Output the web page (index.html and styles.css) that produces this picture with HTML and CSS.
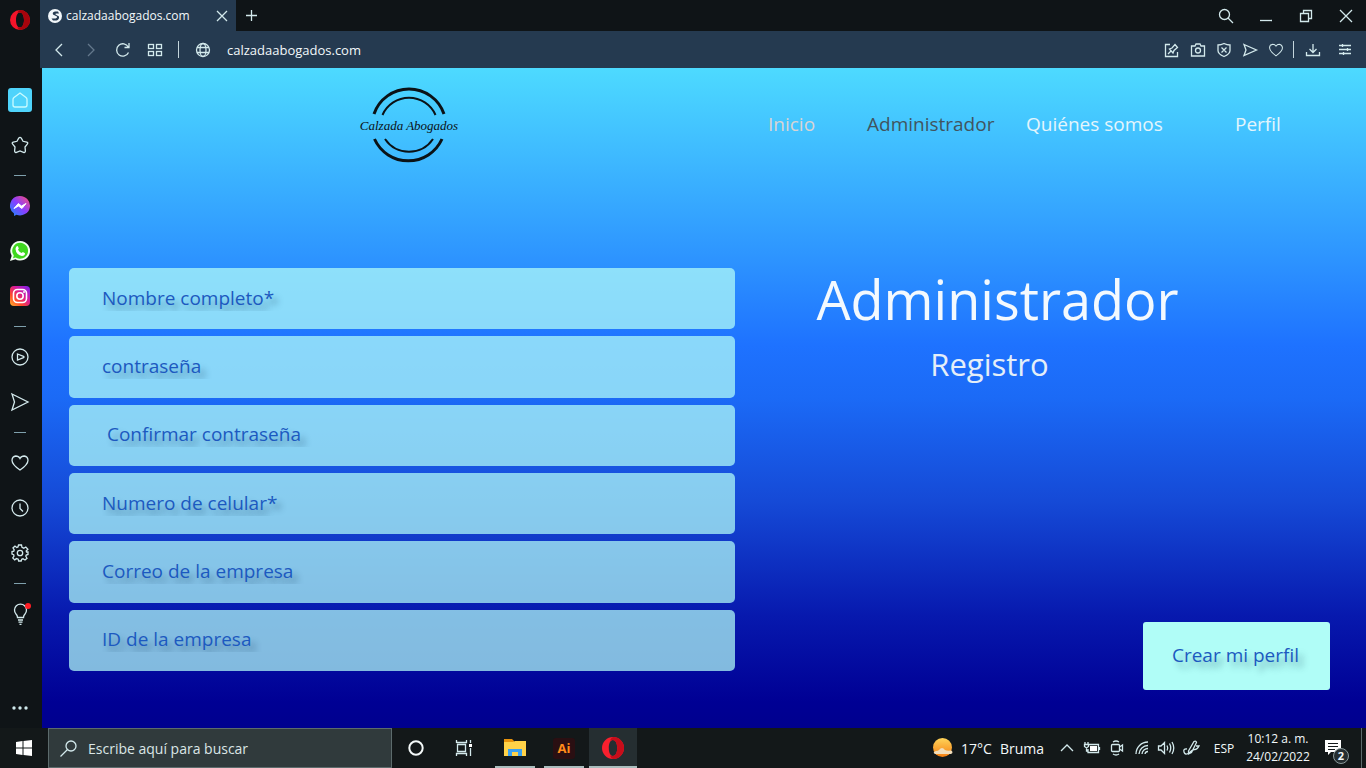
FILE: index.html
```html
<!DOCTYPE html>
<html lang="es">
<head>
<meta charset="utf-8">
<title>calzadaabogados.com</title>
<link rel="stylesheet" href="styles.css">
</head>
<body>
<div class="desktop">
  <aside class="sidebar">
    <button class="side-brand" aria-label="Opera"><svg width="20" height="20" viewBox="0 0 20 20"><path d="M10 0a10 10 0 1 0 0 20a10 10 0 0 0 0-20zM10 2.500c2.600 0 4 3.500 4 7.500s-1.400 7.500-4 7.500s-4-3.500-4-7.500s1.400-7.500 4-7.500z" fill="#f5142a" fill-rule="evenodd"/><path d="M10 0a10 10 0 0 1 0 20c-1-.300-2-1.300-2.500-3c4 2 6.500-2 6.500-7s-2.500-9-6.500-7C8 1.300 9 .300 10 0z" fill="#a8040c"/></svg></button>
    <nav class="side-list" aria-label="Barra lateral">
      <button class="side-btn" aria-label="Inicio"><span class="home-tile"><svg width="24" height="24" viewBox="0 0 24 24" class="line"><path d="M12 5L18 9.500Q19 10.300 19 11.500V17Q19 19 17 19H7Q5 19 5 17V11.500Q5 10.300 6 9.500z" stroke="#c9fbff"/></svg></span></button>
      <button class="side-btn" aria-label="Marcadores"><svg width="18" height="18" viewBox="0 0 18 18" class="line"><path d="M7.700 2.200Q9 .500 10.300 2.200L12 5.300L15.800 6.100Q17.500 6.700 16.300 8.200L14 11L14.400 15Q14.300 17 12.500 16.300L9 15L5.500 16.300Q3.700 17 3.600 15L4 11L1.700 8.200Q.500 6.700 2.200 6.100L6 5.300z"/></svg></button>
      <span class="side-rule"></span>
      <button class="side-btn" aria-label="Messenger"><svg width="20" height="20" viewBox="0 0 20 20"><defs><linearGradient id="msg" x1="0" y1="1" x2="1" y2="0"><stop offset="0" stop-color="#178cff"/><stop offset=".5" stop-color="#8a3dff"/><stop offset="1" stop-color="#ff4f70"/></linearGradient></defs><path d="M10 0a10 9.700 0 1 1-3.500 18.800L4 20v-2.500A9.700 9.700 0 0 1 10 0z" fill="url(#msg)"/><path d="M4 12.500L8.300 7.500L11.500 10L16 7.500L12 12.500L8.500 10z" fill="#fff" stroke="#fff" stroke-linejoin="round"/></svg></button>
      <button class="side-btn" aria-label="WhatsApp"><svg width="20" height="20" viewBox="0 0 20 20"><path d="M10.200 0a9.800 9.800 0 1 1-4.800 18.300L0 20l1.700-5.200A9.800 9.800 0 0 1 10.200 0z" fill="#f2fff0"/><path d="M10.200 1.800a8 8 0 1 1-4.500 14.700L3 17.300l.800-2.800A8 8 0 0 1 10.200 1.800z" fill="#3fd81e"/><path d="M6.500 5.500Q7.500 4.700 8 5.600L8.800 7.600L8 8.800Q9.300 11.200 11.700 12L12.900 11L15 12.200Q15 15 12 15Q6 13.800 5.500 8Q5.500 6.500 6.500 5.500z" fill="#fff"/></svg></button>
      <button class="side-btn" aria-label="Instagram"><svg width="20" height="20" viewBox="0 0 20 20"><defs><linearGradient id="ig" x1="0" y1="1" x2="1" y2="0"><stop offset="0" stop-color="#ffb62e"/><stop offset=".3" stop-color="#ff4a2b"/><stop offset=".6" stop-color="#d81b9a"/><stop offset="1" stop-color="#7523f5"/></linearGradient></defs><rect width="20" height="20" rx="4" fill="url(#ig)"/><rect x="3.500" y="3.500" width="13" height="13" rx="4" fill="none" stroke="#fff" stroke-width="1.600"/><circle cx="10" cy="10" r="3.200" fill="none" stroke="#fff" stroke-width="1.600"/><circle cx="14" cy="6" r="1" fill="#fff"/></svg></button>
      <span class="side-rule"></span>
      <button class="side-btn" aria-label="Reproductor"><svg width="18" height="18" viewBox="0 0 18 18" class="line"><circle cx="9" cy="9" r="8"/><path d="M6.500 6L12.500 8.300Q13.500 9 12.500 9.700L6.500 12z"/></svg></button>
      <button class="side-btn" aria-label="Mi Flow"><svg width="18" height="18" viewBox="0 0 18 18" class="line"><path d="M1 1L17 9L1 17L3.500 9z"/></svg></button>
      <span class="side-rule"></span>
      <button class="side-btn" aria-label="Favoritos"><svg width="18" height="18" viewBox="0 0 18 18" class="line"><path d="M9 16Q1 10.500 1 6.200Q1.200 2.500 4.800 2Q7.700 2 9 4.500Q10.300 2 13.200 2Q16.800 2.500 17 6.200Q17 10.500 9 16z"/></svg></button>
      <button class="side-btn" aria-label="Historial"><svg width="18" height="18" viewBox="0 0 18 18" class="line"><circle cx="9" cy="9" r="8"/><path d="M9 4.500V9.500L12 12.500"/></svg></button>
      <button class="side-btn" aria-label="Ajustes"><svg width="18" height="18" viewBox="0 0 18 18" class="line"><path d="M7.500 1H10.500L11 3.300L12.800 4.200L14.800 3L16.900 5.200L15.200 7L15.500 8H17V10.500L15.200 11L14.800 12.200L16 14.300L14 16L12 14.800L10.700 15.300L10.200 17H7.600L7.200 15.200L5.500 14.600L3.700 15.900L1.800 14L3 12.200L2.700 10.700L1 10V7.600L2.800 7.200L3.200 5.800L2 3.900L4 2.100L5.700 3.400L7 2.900z"/><circle cx="9" cy="9" r="2.700"/></svg></button>
      <span class="side-rule"></span>
      <button class="side-btn" aria-label="Sugerencias"><svg width="24" height="22" viewBox="0 0 24 22" class="line"><path d="M9.500 14.500Q9.500 12.500 8 11A6 6 0 1 1 17 11Q15.500 12.500 15.500 14.500zM10 17H15M10.500 19.200H14.500M11.500 21.300H13.500"/><circle cx="20" cy="3" r="3" fill="#ff1d25" stroke="none"/></svg></button>
    </nav>
    <button class="side-more" aria-label="Más"><svg width="16" height="4" viewBox="0 0 16 4" fill="#cfe9ec"><circle cx="2" cy="2" r="1.700"/><circle cx="8" cy="2" r="1.700"/><circle cx="14" cy="2" r="1.700"/></svg></button>
  </aside>

  <div class="browser">
    <div class="tabs">
      <div class="tab">
        <svg width="14" height="14" viewBox="0 0 14 14"><circle cx="7" cy="7" r="7" fill="#f2f7fa"/><path d="M10 2.500H7Q4 3 5 5.500L9 7.500Q9.500 9 7.500 9.500H3.500L5 11.500H8.500Q11.500 10.500 11 7.500L7.500 5.500Q7 4.500 8.500 4.500H11z" fill="#253a50"/></svg>
        <span class="tab-title">calzadaabogados.com</span>
        <button class="tab-close" aria-label="Cerrar pestaña"><svg width="10" height="10" viewBox="0 0 10 10" class="line"><path d="M0 0L10 10M10 0L0 10"/></svg></button>
      </div>
      <button class="tab-new" aria-label="Pestaña nueva"><svg width="11" height="11" viewBox="0 0 11 11" class="line"><path d="M5.500 0V11M0 5.500H11"/></svg></button>
      <div class="window-controls">
        <button aria-label="Buscar pestañas"><svg width="14" height="14" viewBox="0 0 14 14" class="line"><circle cx="5.500" cy="5.500" r="5"/><path d="M9 9L14 14"/></svg></button>
        <button aria-label="Minimizar"><svg width="12" height="12" viewBox="0 0 12 12" class="line"><path d="M0 10.500H12"/></svg></button>
        <button aria-label="Restaurar"><svg width="12" height="12" viewBox="0 0 12 12" class="line"><path d="M.500 3.500H8.500V11.500H.500zM3.500 3.500V.500H11.500V8.500H8.500"/></svg></button>
        <button aria-label="Cerrar"><svg width="12" height="12" viewBox="0 0 12 12" class="line"><path d="M0 0L12 12M12 0L0 12"/></svg></button>
      </div>
    </div>

    <div class="toolbar">
      <div class="tools-left">
        <button aria-label="Atrás"><svg width="14" height="14" viewBox="0 0 14 14" class="line"><path d="M10 1L4 7L10 13"/></svg></button>
        <button aria-label="Adelante" disabled><svg width="14" height="14" viewBox="0 0 14 14" class="line dim"><path d="M4 1L10 7L4 13"/></svg></button>
        <button aria-label="Recargar"><svg width="14" height="14" viewBox="0 0 14 14" class="line"><path d="M12.500 9.500A6.200 6.200 0 1 1 12.300 4M13 0V4.500H8.500"/></svg></button>
        <button aria-label="Acceso rápido"><svg width="14" height="12" viewBox="0 0 14 12" class="line"><rect x=".500" y=".500" width="5" height="4"/><rect x="8.500" y=".500" width="5" height="4"/><rect x=".500" y="7.500" width="5" height="4"/><rect x="8.500" y="7.500" width="5" height="4"/></svg></button>
      </div>
      <span class="tool-rule"></span>
      <button class="site-info" aria-label="Información del sitio"><svg width="14" height="14" viewBox="0 0 14 14" class="line"><circle cx="7" cy="7" r="6.500"/><ellipse cx="7" cy="7" rx="3" ry="6.500"/><path d="M1 4.500H13M1 9.500H13"/></svg></button>
      <input class="address" type="text" aria-label="Dirección" value="calzadaabogados.com">
      <div class="tools-right">
        <button aria-label="Editar página"><svg width="14" height="14" viewBox="0 0 14 14" class="line"><path d="M5 1.500H.500V13.500H12.500V9M3 11L6 8M4.500 6L8 10L9 7.500L12.500 4.500L10 1.500L7 5z"/></svg></button>
        <button aria-label="Captura"><svg width="14" height="14" viewBox="0 0 14 14" class="line"><path d="M.500 3H4L5 1H9L10 3H13.500V13H.500z"/><circle cx="7" cy="7.500" r="2.500"/></svg></button>
        <button aria-label="Bloqueador"><svg width="14" height="14" viewBox="0 0 14 14" class="line"><path d="M7 .500Q10 2 13 2V7.500Q13 11 7 13.500Q1 11 1 7.500V2Q4 2 7 .500zM4.500 4.500L9.500 9.500M9.500 4.500L4.500 9.500"/></svg></button>
        <button aria-label="Enviar"><svg width="14" height="14" viewBox="0 0 14 14" class="line"><path d="M1 1.500L13.500 7L1 12.500L3 7z"/></svg></button>
        <button aria-label="Añadir a favoritos"><svg width="14" height="14" viewBox="0 0 18 18" class="line"><path d="M9 16.500Q.700 10.500 .700 6.200Q1 2 4.800 1.500Q7.700 1.500 9 4Q10.300 1.500 13.200 1.500Q17 2 17.300 6.200Q17.300 10.500 9 16.500z"/></svg></button>
      </div>
      <span class="tool-rule"></span>
      <div class="tools-end">
        <button aria-label="Descargas"><svg width="14" height="12" viewBox="0 0 14 12" class="line"><path d="M7 0V8M3.500 5L7 8.500L10.500 5M.500 8V11.500H13.500V8"/></svg></button>
        <button aria-label="Configuración rápida"><svg width="12" height="12" viewBox="0 0 12 12" class="line"><path d="M0 1.500H12M0 5.500H12M0 9.500H12M3.500 0V3M8.500 4V7M4.500 8V11"/></svg></button>
      </div>
    </div>

    <main class="page">
      <header class="site-header">
        <a class="logo" href="#" aria-label="Calzada Abogados">
          <svg width="100" height="80" viewBox="0 0 100 80" fill="none" stroke="#0b1216">
            <path d="M15 30A37 37 0 0 1 85 30M15.500 55A37 37 0 0 0 83 55" stroke-width="3"/>
            <path d="M23.500 31A29 29 0 0 1 76.500 31M26 55A29 29 0 0 0 74 55" stroke-width="2"/>
            <text x="50" y="46" class="logo-text">Calzada Abogados</text>
          </svg>
        </a>
        <nav class="site-nav" aria-label="Principal">
          <a href="#" class="nav-outline">Inicio</a>
          <a href="#" class="nav-current" aria-current="page">Administrador</a>
          <a href="#">Quiénes somos</a>
          <a href="#">Perfil</a>
        </nav>
      </header>
      <form class="register">
        <div class="fields">
          <input type="text" aria-label="Nombre completo" placeholder="Nombre completo*">
          <input type="password" aria-label="Contraseña" placeholder="contraseña">
          <input type="password" aria-label="Confirmar contraseña" placeholder="&nbsp;Confirmar contraseña">
          <input type="tel" aria-label="Numero de celular" placeholder="Numero de celular*">
          <input type="email" aria-label="Correo de la empresa" placeholder="Correo de la empresa">
          <input type="text" aria-label="ID de la empresa" placeholder="ID de la empresa">
        </div>
        <div class="intro">
          <div class="titles">
            <h1>Administrador</h1>
            <h2>Registro</h2>
          </div>
          <button class="submit" type="submit">Crear mi perfil</button>
        </div>
      </form>
    </main>
  </div>

  <footer class="taskbar">
    <button class="start" aria-label="Inicio de Windows"><svg width="16" height="16" viewBox="0 0 16 16" fill="#fff"><path d="M0 2L6.500 1V7.500H0zM7.500 .900L16 0V7.500H7.500zM0 8.500H6.500V15L0 14zM7.500 8.500H16V16L7.500 15z"/></svg></button>
    <label class="search">
      <svg width="17" height="17" viewBox="0 0 17 17" class="line"><circle cx="11" cy="6" r="5"/><path d="M7.500 9.500L.500 16.500"/></svg>
      <input type="text" aria-label="Buscar" placeholder="Escribe aquí para buscar">
    </label>
    <div class="apps">
      <button aria-label="Cortana"><svg width="16" height="16" viewBox="0 0 16 16"><circle cx="8" cy="8" r="6.700" fill="none" stroke="#f4f9f9" stroke-width="2"/></svg></button>
      <button aria-label="Vista de tareas"><svg width="16" height="16" viewBox="0 0 16 16" class="line"><path d="M.500 0V3M.500 2.500H10.500V0M1.500 4.500H9.500V11.500H1.500zM.500 16V13.500H10.500V16M14.500 0V3M14.500 8V16"/><rect x="13" y="4" width="3" height="3" fill="#fff" stroke="none"/></svg></button>
      <button class="open" aria-label="Explorador"><svg width="22" height="18" viewBox="0 0 22 18"><path d="M0 0H8L10 2V5H0z" fill="#e8930c"/><path d="M0 3H9L11 2H22V17H0z" fill="#ffd248"/><path d="M4 10H18V17H14V13H8V17H4z" fill="#3aa0f0"/></svg></button>
      <button class="open" aria-label="Illustrator"><span class="ai">Ai</span></button>
      <button class="open active" aria-label="Opera"><svg width="22" height="22" viewBox="0 0 22 22"><path d="M11 0a11 11 0 1 0 0 22a11 11 0 0 0 0-22zM11 3c3 0 4.200 4 4.200 8s-1.200 8-4.200 8s-4.200-4-4.200-8S8 3 11 3z" fill="#f8202e" fill-rule="evenodd"/><path d="M11 0a11 11 0 0 1 0 22q-2-.500-3-3.500c4.500 2 7.200-2 7.200-7.500S12.500 1.500 8 3.500Q9 .500 11 0z" fill="#c70d1a"/></svg></button>
    </div>
    <div class="tray">
      <button class="weather"><svg width="20" height="20" viewBox="0 0 20 20"><defs><linearGradient id="sun" x1="0" y1="0" x2="0" y2="1"><stop offset="0" stop-color="#ffd45a"/><stop offset="1" stop-color="#f57f12"/></linearGradient></defs><circle cx="9.500" cy="9.500" r="9.500" fill="url(#sun)"/><path d="M2 16Q-1 14 3 13Q5 13 6 12Q9 8 12 12Q14 13 18 12.500Q21 14 18 16z" fill="#f2ddba"/></svg><span>17°C</span><span>Bruma</span></button>
      <div class="tray-icons">
        <button aria-label="Iconos ocultos"><svg width="12" height="8" viewBox="0 0 12 8" class="line"><path d="M0 7L6 1L12 7"/></svg></button>
        <button aria-label="Batería"><svg width="16" height="12" viewBox="0 0 16 12" class="line"><path d="M5 2.500H14.500V10.500H4V7M1 0V2M4 0V2M.500 2.500H4.500V4.500L2.500 6L.500 4.500zM2.500 6V9H4M15.500 5V8"/><rect x="6" y="4" width="7" height="5" fill="#fff" stroke="none"/></svg></button>
        <button aria-label="Cámara"><svg width="12" height="16" viewBox="0 0 12 16" class="line"><path d="M2 2Q5 0 8 2M2 14Q5 16 8 14M8.500 7L11.500 5V11L8.500 9"/><rect x=".500" y="4.500" width="8" height="7" rx="1"/></svg></button>
        <button aria-label="Red"><svg width="14" height="14" viewBox="0 0 14 14" class="line"><path d="M1 13A12 12 0 0 1 13 1M4 13A9 9 0 0 1 13 4.500M7 13A6 6 0 0 1 13 7.500M10 13A3 3 0 0 1 13 10.500"/></svg></button>
        <button aria-label="Volumen"><svg width="17" height="14" viewBox="0 0 17 14" class="line"><path d="M.500 5H3L6.500 1.500V12.500L3 9H.500zM9 4.500Q10.500 7 9 9.500M11.500 2.500Q14 7 11.500 11.500M14 1Q17.500 7 14 13"/></svg></button>
        <button aria-label="Lápiz"><svg width="17" height="16" viewBox="0 0 17 16" class="line"><path d="M5.500 11L11 1.500Q13 .500 13.500 2.500L8.500 12.500L5.500 14zM4 9Q0 8.500 1 12Q2 15.500 6 13Q9 10 11 9.500Q14 10 16 6L13 6"/></svg></button>
      </div>
      <button class="lang">ESP</button>
      <button class="clock"><span>10:12 a. m.</span><span>24/02/2022</span></button>
      <button class="notices" aria-label="Notificaciones"><svg width="16" height="16" viewBox="0 0 16 16"><path d="M0 0H16V12H6L3 15V12H0z" fill="#fff"/><path d="M3 3.500H13M3 6.500H13M3 9.500H10" stroke="#14191b"/></svg><span class="badge">2</span></button>
    </div>
  </footer>
</div>
</body>
</html>
```
FILE: styles.css
```css
* { box-sizing: border-box; }

body {
  margin: 0;
  font-family: "Open Sans", "Noto Sans", sans-serif;
  color: #f2f8fa;
}

button {
  display: flex;
  align-items: center;
  justify-content: center;
  padding: 0;
  border: 0;
  background: none;
  color: inherit;
  font: inherit;
}

input {
  border: 0;
  background: none;
  color: inherit;
  font: inherit;
  min-width: 0;
}

.line {
  fill: none;
  stroke: #d3e9ec;
  stroke-width: 1.3;
  overflow: visible;
}

.dim { stroke: #64788c; }

.desktop {
  display: grid;
  grid-template: 1fr 40px / 40px 1fr;
  min-height: 100vh;
  background: #0f1417;
}

/* Sidebar */
.sidebar {
  display: flex;
  flex-direction: column;
}

.side-brand { height: 40px; }

.side-list {
  display: flex;
  flex-direction: column;
  align-items: center;
  padding-top: 37px;
}

.side-btn {
  width: 100%;
  height: 45px;
}

.home-tile {
  display: flex;
  border-radius: 3px;
  background: #4fd3fb;
}

.side-rule {
  width: 12px;
  height: 1px;
  margin: 8px 0 7px;
  background: #7fa0ac;
}

.side-more {
  height: 40px;
  margin-top: auto;
}

/* Browser */
.browser {
  display: flex;
  flex-direction: column;
  min-width: 0;
}

.tabs {
  display: flex;
  height: 31px;
}

.tab {
  display: flex;
  align-items: center;
  width: 196px;
  padding: 0 8px;
  background: #253a50;
  font-size: 12px;
}

.tab-title { padding-left: 4px; }

.tab-close {
  width: 12px;
  height: 20px;
  margin-left: auto;
}

.tab-new { width: 31px; }

.window-controls {
  display: flex;
  margin-left: auto;
}

.window-controls button { width: 40px; }

.toolbar {
  display: flex;
  align-items: center;
  height: 37px;
  padding: 0 5px 0 3px;
  background: #253a50;
}

.tools-left,
.tools-right,
.tools-end { display: flex; }

.tools-left { margin-right: 3px; }

.tools-left button,
.tools-end button { width: 32px; }

.tools-right button { width: 26px; }

.tool-rule {
  width: 1px;
  height: 17px;
  margin: 0 3px 0 4px;
  background: #c4d5dc;
}

.site-info { width: 42px; }

.address {
  flex: 1;
  padding: 0 3px;
  font-size: 13px;
}

/* Page */
.page {
  display: flex;
  flex: 1;
  flex-direction: column;
  margin-left: 2px;
  background: linear-gradient(#4ddaff, #2e96ff 28%, #1e72ff 42%, #1b6af6 50%, #1549d6 66%, #0719ae 83%, #000094 96%, #00008e);
}

.site-header {
  display: grid;
  grid-template-columns: 726fr 598fr;
  padding: 16px 0 0;
  align-items: center;
}

.logo {
  display: flex;
  justify-self: center;
  padding-left: 8px;
}

.logo-text {
  fill: #0b1216;
  stroke: none;
  font: italic 13px "Liberation Serif", serif;
  text-anchor: middle;
}

.site-nav {
  display: grid;
  grid-template-columns: 99fr 159fr 209fr 131fr;
  font-size: 19px;
}

.site-nav a {
  color: #e4f5fc;
  text-decoration: none;
}

.site-nav .nav-outline { color: #d9d4d4; }
.site-nav .nav-current { color: #41545e; }

.register {
  display: grid;
  flex: 1;
  grid-template-columns: 666fr 595fr;
  padding: 104px 36px 38px 27px;
}

.fields {
  display: grid;
  grid-auto-rows: 1fr;
  gap: 7px;
  padding-bottom: 19px;
}

.fields input {
  min-height: 48px;
  padding: 0 33px 2px;
  border-radius: 5px;
  background: rgba(180, 255, 248, 0.72);
  color: #1c59c0;
  font-size: 19px;
}

.fields input::placeholder {
  color: #1c59c0;
  opacity: 1;
  text-shadow: 5px 6px 6px rgba(20, 60, 90, 0.4);
}

.intro {
  display: flex;
  flex-direction: column;
  justify-content: space-between;
}

.titles {
  padding-right: 70px;
  text-align: center;
}

h1,
h2 {
  margin: 0;
  font-weight: 400;
}

h1 {
  color: #f3f9fe;
  font-size: 54px;
  line-height: 62px;
}

h2 {
  padding: 12px 16px 0 0;
  color: #e4eef8;
  font-size: 31px;
  line-height: 44px;
}

.submit {
  align-self: flex-end;
  padding: 20px 31px 22px 29px;
  border-radius: 3px;
  background: #b0fdf7;
  color: #1c59c0;
  font-size: 19px;
  text-shadow: 5px 6px 6px rgba(20, 60, 90, 0.4);
}

/* Taskbar */
.taskbar {
  display: flex;
  grid-column: 1 / -1;
  background: #131819;
}

.start { width: 48px; }

.search {
  display: flex;
  align-items: center;
  gap: 10px;
  width: 344px;
  padding: 0 11px;
  border: 1px solid #5c6b6c;
  background: #303a3c;
}

.search input {
  flex: 1;
  padding: 0 1px;
  font-size: 14px;
}

.search input::placeholder {
  color: #dbe6e6;
  opacity: 1;
}

.apps { display: flex; }

.apps button {
  width: 48px;
  border-top: 2px solid transparent;
  border-bottom: 2px solid transparent;
}

.apps .open {
  width: 40px;
  margin: 0 2px 0 7px;
  border-bottom-color: #a9bdbd;
}

.apps .active {
  width: 48px;
  margin: 0 0 0 3px;
  background: #252e31;
}

.ai {
  width: 22px;
  border-radius: 3px;
  background: #2a0f12;
  color: #ff8c1a;
  font-size: 13px;
  font-weight: 700;
  line-height: 21px;
}

.tray {
  display: flex;
  margin-left: auto;
  padding-right: 7px;
  border-right: 1px solid #5c6b6c;
  margin-right: 4px;
}

.weather {
  gap: 8px;
  font-size: 14px;
}

.tray-icons {
  display: flex;
  margin-left: 10px;
}

.tray-icons button { width: 25px; }

.lang {
  width: 40px;
  font-size: 12px;
}

.clock {
  flex-direction: column;
  width: 68px;
  font-size: 12px;
  line-height: 18px;
}

.notices {
  position: relative;
  width: 42px;
}

.badge {
  position: absolute;
  right: 5px;
  bottom: 4px;
  width: 16px;
  border: 1px solid #8b9a9b;
  border-radius: 50%;
  background: #252e31;
  font-size: 11px;
  font-weight: 700;
  line-height: 14px;
}
```
